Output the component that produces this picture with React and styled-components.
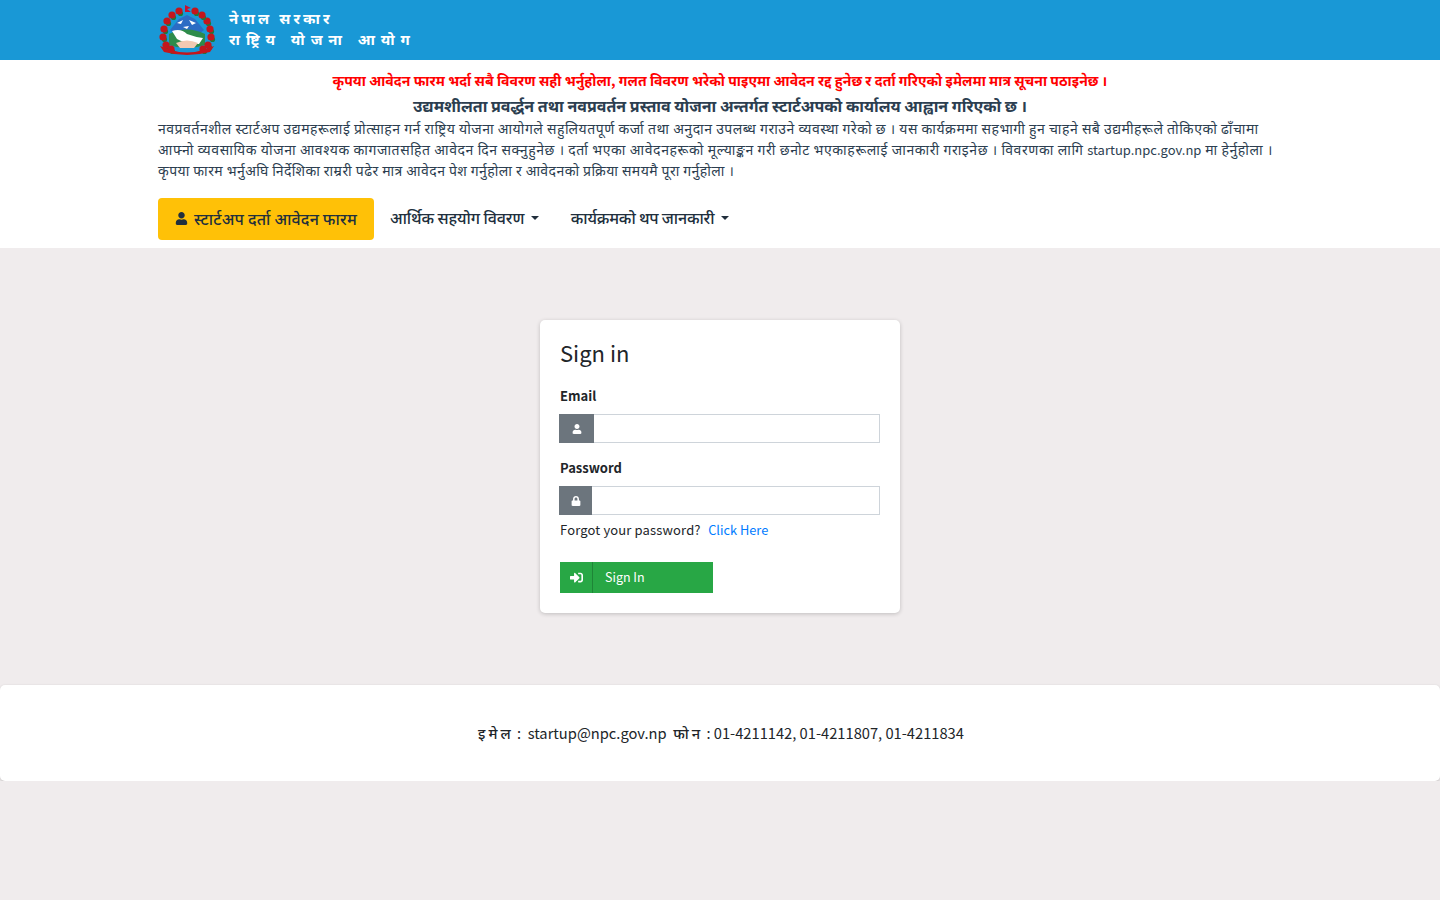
import React from "react"
import styled, { createGlobalStyle } from "styled-components"
import { FaUser, FaLock, FaSignInAlt } from "react-icons/fa"

const GlobalStyle = createGlobalStyle`
  * { box-sizing: border-box; }
  html, body { margin: 0; padding: 0; }
  body {
    background: #f0eced;
    color: #212529;
    font-family: "Noto Sans CJK JP", "Noto Sans", sans-serif;
    font-size: 13px;
    line-height: 21px;
  }
`

function Emblem() {
  const roses = [
    [8, 16], [5, 24], [4, 32], [7, 40], [13, 10], [20, 6], [12, 44],
    [48, 16], [51, 24], [52, 32], [49, 40], [43, 10], [36, 6], [44, 44],
  ]
  return (
    <svg width="58" height="50" viewBox="0 0 56 50">
      <path d="M26 0 L32 3 L28 4 L32 7 L26 7 Z" fill="#c8102e" />
      <path d="M11 25 L20 14 L28 10 L36 14 L45 25 L40 29 L16 29 Z" fill="#2b6cc4" />
      <path d="M18 18 L24 15 L22 19 Z M30 15 L37 18 L33 20 Z M24 22 L30 21 L28 24 Z" fill="#fff" />
      <path d="M10 29 Q28 20 46 29 L46 40 Q28 46 10 40 Z" fill="#2e8b4a" />
      <path d="M13 26 Q22 23 28 29 Q36 32 44 33 L40 39 Q26 39 18 34 Z" fill="#fff" />
      <path d="M17 38 Q28 33 39 38 L35 43 L21 43 Z" fill="#f1c9b2" />
      {roses.map(([x, y]) => (
        <g key={`${x}-${y}`}>
          <circle cx={x + 1.5} cy={y + 2.5} r="2.6" fill="#1e7a3a" />
          <circle cx={x} cy={y} r="3.6" fill="#c3161c" />
        </g>
      ))}
      <path d="M1 41 L12 45 Q28 50 44 45 L55 41 L51 47 Q28 53 5 47 Z" fill="#c3161c" />
    </svg>
  )
}

export default function App() {
  return (
    <>
      <GlobalStyle />
      <TopBar>
        <Container>
          <Brand>
            <Emblem />
            <BrandText>
              <BrandLine $spacing={3.1}>नेपाल सरकार</BrandLine>
              <BrandLine $spacing={5.9}>राष्ट्रिय योजना आयोग</BrandLine>
            </BrandText>
          </Brand>
        </Container>
      </TopBar>
      <Masthead>
        <Container>
          <Notice>
            कृपया आवेदन फारम भर्दा सबै विवरण सही भर्नुहोला, गलत विवरण भरेको पाइएमा आवेदन रद्द हुनेछ र दर्ता
            गरिएको इमेलमा मात्र सूचना पठाइनेछ ।
          </Notice>
          <Title>
            उद्यमशीलता प्रवर्द्धन तथा नवप्रवर्तन प्रस्ताव योजना अन्तर्गत स्टार्टअपको कार्यालय आह्वान गरिएको छ ।
          </Title>
          <Intro>
            <IntroLine $spacing={0.52}>
              नवप्रवर्तनशील स्टार्टअप उद्यमहरूलाई प्रोत्साहन गर्न राष्ट्रिय योजना आयोगले सहुलियतपूर्ण कर्जा तथा
              अनुदान उपलब्ध गराउने व्यवस्था गरेको छ । यस कार्यक्रममा सहभागी हुन चाहने सबै उद्यमीहरूले तोकिएको ढाँचामा
            </IntroLine>
            <IntroLine $spacing={0.6}>
              आफ्नो व्यवसायिक योजना आवश्यक कागजातसहित आवेदन दिन सक्नुहुनेछ । दर्ता भएका आवेदनहरूको मूल्याङ्कन
              गरी छनोट भएकाहरूलाई जानकारी गराइनेछ । विवरणका लागि <SiteName>startup.npc.gov.np</SiteName> मा हेर्नुहोला ।
            </IntroLine>
            <IntroLine $spacing={0.43}>
              कृपया फारम भर्नुअघि निर्देशिका राम्ररी पढेर मात्र आवेदन पेश गर्नुहोला र आवेदनको प्रक्रिया समयमै पूरा गर्नुहोला ।
            </IntroLine>
          </Intro>
          <Menu>
            <ApplyButton>
              <FaUser size={13} />
              स्टार्टअप दर्ता आवेदन फारम
            </ApplyButton>
            <MenuLink $spacing={-0.1}>आर्थिक सहयोग विवरण</MenuLink>
            <MenuLink $spacing={-0.2}>कार्यक्रमको थप जानकारी</MenuLink>
          </Menu>
        </Container>
      </Masthead>
      <Main>
        <Card>
          <CardTitle>Sign in</CardTitle>
          <Label htmlFor="email">Email</Label>
          <InputGroup>
            <Addon $width={35}>
              <FaUser size={10} />
            </Addon>
            <Field id="email" type="text" />
          </InputGroup>
          <Label htmlFor="password" $spaced>Password</Label>
          <InputGroup>
            <Addon $width={33}>
              <FaLock size={10} />
            </Addon>
            <Field id="password" type="password" />
          </InputGroup>
          <Forgot>
            Forgot your password?<ForgotLink>Click Here</ForgotLink>
          </Forgot>
          <SignIn>
            <SignInIcon>
              <FaSignInAlt size={13} />
            </SignInIcon>
            <SignInText>Sign In</SignInText>
          </SignIn>
        </Card>
      </Main>
      <Footer>
        <FooterLabel>इमेल</FooterLabel> : &nbsp;startup@npc.gov.np &nbsp;
        <FooterLabel>फोन</FooterLabel> : 01-4211142, 01-4211807, 01-4211834
      </Footer>
    </>
  )
}

const Container = styled.div`
  width: 1140px;
  margin: 0 auto;
  padding: 0 8px;
`
const TopBar = styled.header`
  height: 60px;
  background: #1998d6;
`
const Brand = styled.div`
  display: flex;
  align-items: center;
  height: 60px;
  gap: 13px;
`
const BrandText = styled.div`
  padding-bottom: 2px;
  color: #fff;
  font-family: "Noto Sans", sans-serif;
  font-size: 15px;
  font-weight: 700;
`
const BrandLine = styled.div`
  line-height: 21px;
  letter-spacing: ${({ $spacing }) => $spacing}px;
`
const Masthead = styled.section`
  height: 188px;
  background: #fff;
  padding-top: 10px;
`
const Notice = styled.div`
  color: #f00;
  font-size: 14px;
  font-weight: 700;
  line-height: 21px;
  letter-spacing: 0.07px;
  text-align: center;
  white-space: nowrap;
`
const Title = styled.h1`
  margin: 4px 0 0;
  color: #2c3e50;
  font-size: 16px;
  font-weight: 700;
  line-height: 21px;
  text-align: center;
  white-space: nowrap;
`
const Intro = styled.div`
  margin-top: 2px;
  color: #2c3e50;
  font-size: 14px;
`
const IntroLine = styled.div`
  line-height: 21px;
  letter-spacing: ${({ $spacing }) => $spacing}px;
  white-space: nowrap;
`
const SiteName = styled.span`
  font-size: 13px;
  letter-spacing: 0;
`
const Menu = styled.nav`
  display: flex;
  align-items: center;
  margin-top: 17px;
`
const ApplyButton = styled.a`
  display: flex;
  align-items: center;
  gap: 6px;
  height: 42px;
  padding: 0 17px 1px;
  background: #ffc107;
  border-radius: 4px;
  color: #212f3d;
  font-size: 16px;
  font-weight: 500;
  letter-spacing: 0.2px;
`
const MenuLink = styled.a`
  display: flex;
  align-items: center;
  padding: 0 16px 3px;
  color: #212f3d;
  font-size: 16px;
  font-weight: 500;
  letter-spacing: ${({ $spacing }) => $spacing}px;

  &::after {
    content: "";
    margin-left: 6.5px;
    border-top: 4.8px solid currentColor;
    border-left: 4.8px solid transparent;
    border-right: 4.8px solid transparent;
  }
`
const Main = styled.main`
  display: flex;
  justify-content: center;
  padding: 72px 0;
`
const Card = styled.div`
  width: 360px;
  height: 293px;
  padding: 20px;
  background: #fff;
  border-radius: 5px;
  box-shadow: 0 1px 4px rgba(0, 0, 0, 0.2);
`
const CardTitle = styled.h2`
  margin: 0 0 21px;
  font-size: 22px;
  font-weight: 400;
  line-height: 25px;
`
const Label = styled.label`
  display: block;
  margin: ${({ $spaced }) => ($spaced ? "14px" : "-1px")} 0 8px;
  font-size: 13px;
  font-weight: 700;
  line-height: 21px;
`
const InputGroup = styled.div`
  display: flex;
  height: 29px;
  margin-left: -1px;
`
const Addon = styled.span`
  display: flex;
  align-items: center;
  justify-content: center;
  flex: 0 0 ${({ $width }) => $width}px;
  background: #6c757d;
  color: #fff;
`
const Field = styled.input`
  flex: 1;
  min-width: 0;
  border: 1px solid #ced4da;
  border-left-width: 0;
  background: #fff;
  outline: none;
`
const Forgot = styled.div`
  margin-top: 4px;
  line-height: 21px;
  letter-spacing: 0.15px;
`
const ForgotLink = styled.a`
  margin-left: 7.5px;
  color: #007bff;
  font-size: 12.8px;
  letter-spacing: 0;
`
const SignIn = styled.button`
  display: flex;
  align-items: center;
  width: 153px;
  height: 31px;
  margin-top: 22px;
  padding: 0;
  border: none;
  background: #28a745;
  color: #fff;
  font-family: inherit;
  font-size: 12.5px;
`
const SignInIcon = styled.span`
  display: flex;
  align-items: center;
  justify-content: center;
  flex: 0 0 33px;
  height: 100%;
  border-right: 1px solid #1e8537;
`
const SignInText = styled.span`
  padding: 0 0 2px 12px;
`
const Footer = styled.footer`
  height: 96px;
  padding: 37px 0 0 2px;
  background: #fff;
  border-radius: 5px;
  box-shadow: 0 1px 3px rgba(0, 0, 0, 0.2);
  font-size: 14.7px;
  line-height: 22px;
  text-align: center;
`
const FooterLabel = styled.span`
  font-weight: 500;
  letter-spacing: 3px;
`
